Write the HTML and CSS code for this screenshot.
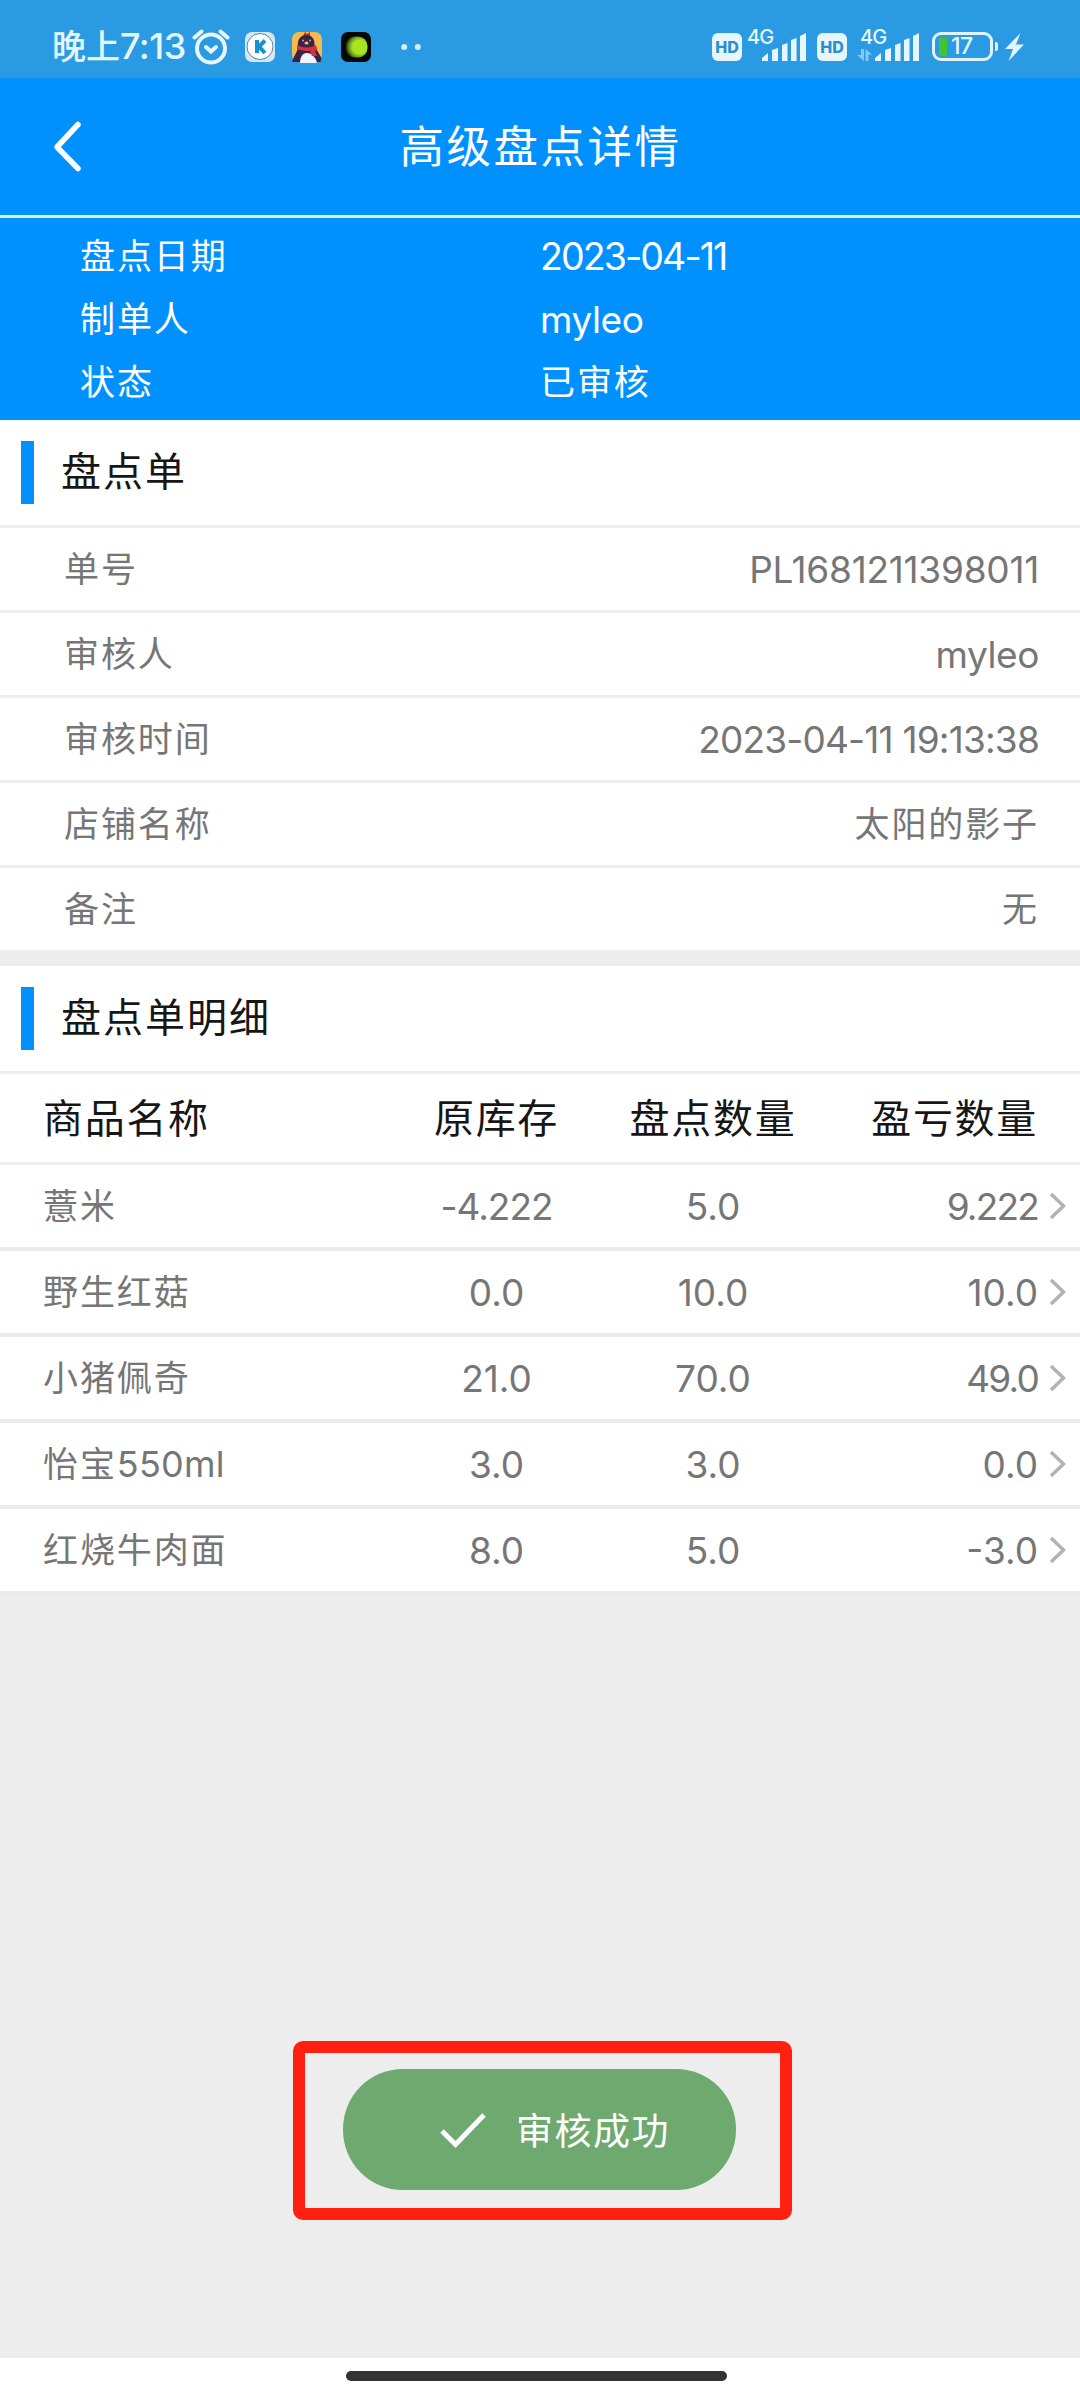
FILE: index.html
```html
<!DOCTYPE html>
<html lang="zh-CN">
<head>
<meta charset="utf-8">
<title>高级盘点详情</title>
<link rel="stylesheet" href="styles.css">
</head>
<body>
<div class="screen">
  <div class="status">
    <span class="clock">晚上<span class="time">7:13</span></span>
    <svg class="alarm" width="38" height="36" viewBox="0 0 38 36" fill="none" stroke="#e6f6ff" stroke-width="4" stroke-linecap="round">
      <circle cx="19" cy="19.500" r="14"/><path d="M14 18l5 4.500 5-4.500M2.500 8.500l7-6M35.500 8.500l-7-6"/>
    </svg>
    <svg class="app app-k" width="30" height="30" viewBox="0 0 30 30">
      <rect width="30" height="30" rx="7" fill="#dce6f1"/><circle cx="15" cy="14.500" r="13" fill="#fff" stroke="#3a8ccb" stroke-width="1"/>
      <path d="M12 8v13M20 8.500l-6 6 6 6.500" fill="none" stroke="#1593cf" stroke-width="4"/>
    </svg>
    <svg class="app app-penguin" width="32" height="32" viewBox="0 0 32 32">
      <rect x="1" y="1" width="30" height="30" rx="7" fill="#f5b94c"/>
      <path d="M12 5l2-4 2 2 3-2v4z" fill="#b43a2c"/>
      <path d="M7 16C6 8 10 4 15.500 4S24 8 23.500 15l7 12-1 4H2l-1-1 5-10z" fill="#3d2140"/>
      <path d="M9 32c0-5 2-10 7-10s9 5 10 10z" fill="#f1f3fa"/>
      <path d="M6 14q10 5 19 0l1 4-2 2 2 5h-5l-2-5Q11 20 6 18z" fill="#d42f43"/>
      <ellipse cx="15.500" cy="12" rx="2" ry="1.500" fill="#f6c463"/><circle cx="12" cy="9.500" r="1" fill="#bba5be"/><circle cx="19" cy="9.500" r="1" fill="#bba5be"/>
    </svg>
    <svg class="app app-green" width="30" height="30" viewBox="0 0 30 30">
      <defs><radialGradient id="glow" cx=".65" cy=".5" r=".65"><stop offset=".5" stop-color="#a9e51e"/><stop offset=".75" stop-color="#6f9c1f"/><stop offset="1" stop-color="#17210a"/></radialGradient></defs>
      <rect width="30" height="30" rx="7" fill="#050805"/><rect x="4.500" y="4.500" width="22" height="21" rx="9.500" fill="url(#glow)"/>
    </svg>
    <svg class="dots" width="20" height="8" viewBox="0 0 20 8" fill="#d5eefc"><circle cx="3.200" cy="4" r="3"/><circle cx="16.800" cy="4" r="3"/></svg>

    <div class="system">
      <span class="hd">HD</span>
      <span class="signal">
        <span class="net">4G</span>
        <svg class="bars" width="44" height="28" viewBox="0 0 44 28" fill="#e6f6ff"><path d="M0 28v-3l6-5v8zM10 28V17l6-2v13zM20 28V12l5.500-2v18zM29 28V7l5.500-2v23zM38 28V3l6-3v28z"/></svg>
      </span>
      <span class="hd hd-second">HD</span>
      <span class="signal signal-data">
        <span class="net">4G</span>
        <svg class="arrows" width="15" height="12" viewBox="0 0 15 12" fill="#87c8f2"><path d="M4 0h3v12L0 6h4zM8.500 0L15 5.500h-3.500V12h-3z"/></svg>
        <svg class="bars" width="44" height="28" viewBox="0 0 44 28" fill="#e6f6ff"><path d="M0 28v-3l6-5v8zM10 28V17l6-2v13zM20 28V12l5.500-2v18zM29 28V7l5.500-2v23zM38 28V3l6-3v28z"/></svg>
      </span>
      <span class="battery"><span class="charge"></span><span class="level">17</span></span>
      <span class="nub"></span>
      <svg class="bolt" width="19" height="28" viewBox="0 0 19 28" fill="#e0f3ff"><path d="M15.500 0L0 16h8L3.500 28 19 11.500h-8z"/></svg>
    </div>
  </div>

  <header class="navbar">
    <svg class="back" width="30" height="54" viewBox="0 0 30 54" fill="none" stroke="#fff" stroke-width="5.500" stroke-linecap="round" stroke-linejoin="round"><path d="M25 4.500L4 27l21 21.500"/></svg>
    <h1 class="title">高级盘点详情</h1>
  </header>

  <section class="summary">
    <div class="sum-row"><span>盘点日期</span><span class="sum-date">2023-04-11</span></div>
    <div class="sum-row"><span>制单人</span><span class="latin">myleo</span></div>
    <div class="sum-row"><span>状态</span><span class="sum-state">已审核</span></div>
  </section>

  <section class="card">
    <h2 class="heading">盘点单</h2>
    <div class="row"><span>单号</span><span class="value serial">PL1681211398011</span></div>
    <div class="row"><span>审核人</span><span class="value latin">myleo</span></div>
    <div class="row"><span>审核时间</span><span class="value stamp">2023-04-11 19:13:38</span></div>
    <div class="row"><span>店铺名称</span><span class="value">太阳的影子</span></div>
    <div class="row"><span>备注</span><span class="value">无</span></div>
  </section>

  <section class="card detail">
    <h2 class="heading">盘点单明细</h2>
    <div class="cols head"><span>商品名称</span><span>原库存</span><span>盘点数量</span><span>盈亏数量</span></div>
    <div class="cols item"><span>薏米</span><span class="long">-4.222</span><span>5.0</span><span class="longer">9.222</span><svg class="more" width="18" height="28" viewBox="0 0 18 28"><path d="M2 2l12.500 12L2 26"/></svg></div>
    <div class="cols item"><span>野生红菇</span><span>0.0</span><span>10.0</span><span>10.0</span><svg class="more" width="18" height="28" viewBox="0 0 18 28"><path d="M2 2l12.500 12L2 26"/></svg></div>
    <div class="cols item"><span>小猪佩奇</span><span>21.0</span><span>70.0</span><span class="longer">49.0</span><svg class="more" width="18" height="28" viewBox="0 0 18 28"><path d="M2 2l12.500 12L2 26"/></svg></div>
    <div class="cols item"><span>怡宝<span class="unit">550ml</span></span><span>3.0</span><span>3.0</span><span>0.0</span><svg class="more" width="18" height="28" viewBox="0 0 18 28"><path d="M2 2l12.500 12L2 26"/></svg></div>
    <div class="cols item"><span>红烧牛肉面</span><span>8.0</span><span>5.0</span><span>-3.0</span><svg class="more" width="18" height="28" viewBox="0 0 18 28"><path d="M2 2l12.500 12L2 26"/></svg></div>
  </section>

  <div class="gesture"><span class="pill"></span></div>

  <div class="marker">
    <div class="toast">
      <svg width="48" height="38" viewBox="0 0 48 38" fill="none" stroke="#fff" stroke-width="5"><path d="M3 20l13.500 13.500L45 4"/></svg>
      <span class="message">审核成功</span>
    </div>
  </div>
</div>
</body>
</html>
```
FILE: styles.css
```css
* { box-sizing: border-box; }

body {
  margin: 0;
  background: #ededed;
  font-family: Inter, "Noto Sans CJK SC", sans-serif;
  font-size: 35px;
  letter-spacing: 1.9px;
  color: #767676;
}

.screen {
  position: relative;
  display: flex;
  flex-direction: column;
  width: 1080px;
  height: 2400px;
  overflow: hidden;
}

/* status bar */
.status {
  display: flex;
  align-items: center;
  height: 78px;
  padding: 15px 56px 0 52px;
  background: #2a9be2;
  color: #e6f6ff;
  white-space: nowrap;
}
.clock {
  width: 140px;
  font-size: 34px;
  font-weight: 500;
  letter-spacing: 0;
  line-height: 40px;
}
.time { font-size: 36px; letter-spacing: -.5px; }
.app-k { margin-left: 15px; }
.app-penguin { margin-left: 16px; }
.app-green { margin-left: 18px; }
.dots { margin-left: 30px; }
.system {
  display: flex;
  align-items: center;
  margin-left: auto;
  letter-spacing: 0;
}
.hd {
  width: 30px;
  height: 28px;
  border-radius: 6px;
  background: #e6f6ff;
  color: #2a8fd0;
  font-size: 16px;
  font-weight: 800;
  line-height: 28px;
  text-align: center;
}
.signal {
  display: flex;
  align-items: flex-end;
  height: 28px;
  margin-left: 5px;
}
.net {
  align-self: flex-start;
  width: 15px;
  margin-top: -6px;
  font-size: 20px;
  font-weight: 500;
  letter-spacing: -1px;
  line-height: 20px;
}
.hd-second { margin-left: 11px; }
.signal-data { margin-left: 13px; }
.signal-data .arrows { margin: 0 3px 0 -18px; }
.battery {
  display: flex;
  align-items: center;
  width: 61px;
  height: 29px;
  margin-left: 13px;
  padding-left: 4px;
  border: 3px solid #dff3ff;
  border-radius: 9px;
}
.charge { width: 8px; height: 18px; background: #45c32c; }
.level { margin-left: 4px; font-size: 23px; font-weight: 500; line-height: 23px; letter-spacing: -.5px; }
.nub { width: 3px; height: 9px; margin-left: 2px; border-radius: 0 2px 2px 0; background: #dff3ff; }
.bolt { margin-left: 7px; }

/* title bar */
.navbar {
  display: grid;
  grid-template-columns: 120px 1fr 120px;
  align-items: center;
  height: 140px;
  border-bottom: 3px solid #d2f0ff;
  background: #0091ff;
  color: #fff;
}
.back { margin-left: 53px; }
.title {
  margin: 0;
  padding-left: 1px;
  font-size: 44.500px;
  font-weight: 400;
  letter-spacing: 2.500px;
  line-height: 60px;
  text-align: center;
}

.summary {
  height: 202px;
  padding: 7px 0 0 80px;
  background: #0091ff;
  color: #fff;
}
.sum-row {
  display: grid;
  grid-template-columns: 460px 1fr;
  height: 63px;
  line-height: 63px;
}
.sum-date { font-size: 37.500px; letter-spacing: -1.900px; }
.latin { font-size: 37px; letter-spacing: -.4px; }

/* cards */
.card { background: #fff; }
.heading {
  display: flex;
  align-items: flex-start;
  gap: 27px;
  height: 105px;
  margin: 0;
  padding-left: 21px;
  color: #161616;
  font-size: 40px;
  font-weight: 400;
  letter-spacing: 2px;
  line-height: 103px;
}
.heading::before {
  content: "";
  width: 13px;
  height: 63px;
  margin-top: 21px;
  background: #0091ff;
}
.row {
  display: flex;
  justify-content: space-between;
  height: 85px;
  padding: 0 41px 0 64px;
  border-top: 3px solid #ededed;
  line-height: 82px;
}
.value { text-align: right; }
.row .latin { padding-top: 1px; }
.serial { padding-top: 1px; font-size: 37px; letter-spacing: -.25px; }
.stamp { padding-top: 1px; font-size: 37px; letter-spacing: -.8px; }

.detail { margin-top: 16px; }
.cols {
  display: grid;
  grid-template-columns: 345px 217px 216px 217px 1fr;
  align-items: center;
  padding-left: 43px;
  text-align: center;
}
.cols > :first-child { padding-bottom: 5px; text-align: left; }
.cols > :nth-child(4) { text-align: right; }
.head {
  height: 94px;
  border-top: 3px solid #ededed;
  border-bottom: 3px solid #ededed;
  color: #161616;
  font-size: 40px;
  letter-spacing: 1.700px;
}
.head > span { padding-bottom: 5px; }
.item { height: 86px; border-bottom: 4px solid #ebebeb; }
.item > :nth-child(n+2) { font-size: 37px; letter-spacing: 0; }
.item > .long { letter-spacing: -1px; }
.item > .longer { letter-spacing: -1.800px; }
.unit { font-size: 36px; letter-spacing: .2px; }
.more {
  margin-left: 11px;
  fill: none;
  stroke: #b2b2b8;
  stroke-width: 3.500;
}

/* gesture area */
.gesture {
  display: flex;
  justify-content: center;
  height: 42px;
  margin-top: auto;
  padding: 13px 7px 0 0;
  background: #fff;
}
.pill { width: 381px; height: 10px; border-radius: 5px; background: #333; }

/* result message floating over the page, with its highlight frame */
.marker {
  position: absolute;
  left: 293px;
  top: 2041px;
  width: 499px;
  height: 179px;
  padding: 16px 38px;
  border: 12px solid #ff2010;
  border-radius: 10px;
}
.toast {
  display: flex;
  align-items: center;
  gap: 29px;
  width: 393px;
  height: 121px;
  padding-left: 96px;
  border-radius: 60px;
  background: #6ea96f;
  color: #fff;
  font-size: 37px;
  letter-spacing: 1.500px;
}
.message { padding-bottom: 2px; }
```
